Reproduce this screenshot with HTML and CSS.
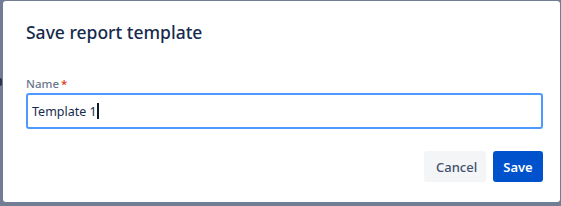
FILE: index.html
```html
<!DOCTYPE html>
<html lang="en">

<head>
  <meta charset="UTF-8" />
  <title>Save report template</title>
  <link rel="stylesheet" href="styles.css">
</head>

<body>
  <div class="backdrop-bit"></div>

  <!-- modal dialog -->
  <div class="modal">
    <h2 class="modal-title">Save report template</h2>

    <form class="field">
      <label for="tpl-name">Name<span class="req">*</span></label>
      <div class="input-box">
        <span class="input-value">Template 1</span><span class="caret"></span>
      </div>
    </form>

    <div class="actions">
      <button class="btn btn-subtle" type="button">Cancel</button>
      <button class="btn btn-primary" type="button">Save</button>
    </div>
  </div>
</body>

</html>
```

FILE: styles.css
```css
* {
  box-sizing: border-box;
}

/* grey overlay behind the modal */
body {
  margin: 0;
  height: 206px;
  overflow: hidden;
  background: #717d93;
  font-family: "Noto Sans", "Open Sans", Arial, sans-serif;
  padding: 1px 0 0 3px;
  position: relative;
}

/* bit of page content peeking out on the left */
.backdrop-bit {
  position: absolute;
  left: 0;
  top: 78px;
  width: 2px;
  height: 8px;
  border-radius: 0 2px 2px 0;
  background: #2a3550;
}

/* dialog box */
.modal {
  width: 557px;
  height: 201px;
  background: #fff;
  border-radius: 3px;
  padding: 19px 17px 0 23px;
  display: flex;
  flex-direction: column;
}

.modal-title {
  margin: 0;
  font-size: 17.5px;
  line-height: 24px;
  font-weight: 500;
  color: #172b4d;
}

.field {
  margin-top: 32px;
  display: flex;
  flex-direction: column;
}

.field label {
  font-size: 11.5px;
  line-height: 16px;
  font-weight: 500;
  color: #6b778c;
}

.req {
  color: #de350b;
  margin-left: 2px;
}

/* focused text input */
.input-box {
  margin-top: 1px;
  height: 36px;
  border: 2px solid #4c9aff;
  border-radius: 3px;
  padding: 0 4px;
  display: flex;
  align-items: center;
  font-size: 12.5px;
  color: #172b4d;
}

.caret {
  display: inline-block;
  width: 2px;
  height: 16px;
  margin-left: 0;
  background: #101828;
}

.actions {
  margin-top: 22px;
  display: flex;
  justify-content: flex-end;
  gap: 7px;
}

.btn {
  height: 31px;
  border: none;
  border-radius: 3px;
  font-family: inherit;
  font-size: 13px;
  font-weight: 500;
  padding: 0 12px;
  cursor: pointer;
}

.btn-subtle {
  width: 62px;
  background: #f4f5f7;
  color: #42526e;
}

.btn-primary {
  width: 50px;
  padding: 0;
  background: #0052cc;
  color: #fff;
  font-weight: 600;
}
```
